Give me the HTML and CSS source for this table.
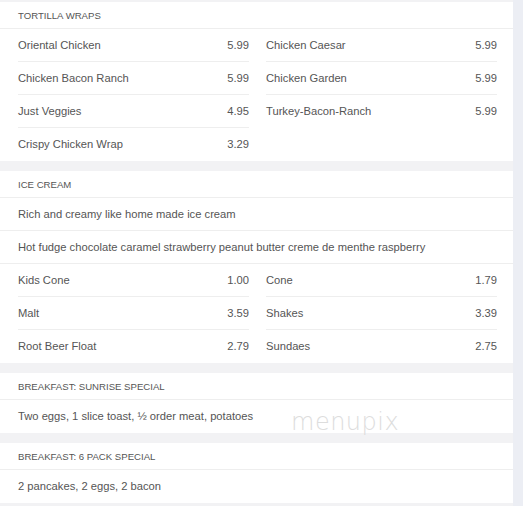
FILE: index.html
```html
<!DOCTYPE html>
<html lang="en">
<head>
    <meta charset="UTF-8">
    <meta name="viewport" content="width=device-width, initial-scale=1.0">
    <title>Menu</title>
    <link rel="stylesheet" href="styles.css">
</head>
<body>
    <div class="page">
        <div class="menu">
            <div class="section">
                <div class="section-title">Tortilla Wraps</div>
                <div class="items">
                    <div class="col">
                        <div class="item"><span>Oriental Chicken</span><span>5.99</span></div>
                        <div class="item"><span>Chicken Bacon Ranch</span><span>5.99</span></div>
                        <div class="item"><span>Just Veggies</span><span>4.95</span></div>
                        <div class="item"><span>Crispy Chicken Wrap</span><span>3.29</span></div>
                    </div>
                    <div class="col">
                        <div class="item"><span>Chicken Caesar</span><span>5.99</span></div>
                        <div class="item"><span>Chicken Garden</span><span>5.99</span></div>
                        <div class="item"><span>Turkey-Bacon-Ranch</span><span>5.99</span></div>
                    </div>
                </div>
            </div>

            <div class="section">
                <div class="section-title">Ice Cream</div>
                <div class="desc">Rich and creamy like home made ice cream</div>
                <div class="desc">Hot fudge chocolate caramel strawberry peanut butter creme de menthe raspberry</div>
                <div class="items">
                    <div class="col">
                        <div class="item"><span>Kids Cone</span><span>1.00</span></div>
                        <div class="item"><span>Malt</span><span>3.59</span></div>
                        <div class="item"><span>Root Beer Float</span><span>2.79</span></div>
                    </div>
                    <div class="col">
                        <div class="item"><span>Cone</span><span>1.79</span></div>
                        <div class="item"><span>Shakes</span><span>3.39</span></div>
                        <div class="item"><span>Sundaes</span><span>2.75</span></div>
                    </div>
                </div>
            </div>

            <div class="section">
                <div class="section-title">Breakfast: Sunrise Special</div>
                <div class="desc last">Two eggs, 1 slice toast, ½ order meat, potatoes</div>
            </div>

            <div class="section">
                <div class="section-title">Breakfast: 6 Pack Special</div>
                <div class="desc last">2 pancakes, 2 eggs, 2 bacon</div>
            </div>

            <div class="watermark">menupix</div>
        </div>
    </div>
</body>
</html>
```

FILE: styles.css
```css
body {
    margin: 0;
    font-family: "Liberation Sans", Arial, sans-serif;
    background-color: #eceef4;
    color: #555;
}
.page {
    width: 513px;
    min-height: 506px;
    background-color: #f2f2f4;
    padding-top: 2px;
}
.menu {
    position: relative;
}
.section {
    background-color: white;
    margin-bottom: 10px;
}
.section-title {
    height: 26px;
    line-height: 28px;
    padding-left: 18px;
    font-size: 9.6px;
    text-transform: uppercase;
    color: #555;
    border-bottom: 1px solid #eee;
}
.desc {
    height: 32px;
    line-height: 33px;
    padding-left: 18px;
    font-size: 11.2px;
    border-bottom: 1px solid #eee;
}
.desc.last {
    border-bottom: none;
    height: 33px;
}
.items {
    display: grid;
    grid-template-columns: 231px 231px;
    column-gap: 17px;
    padding-left: 18px;
}
.item {
    display: flex;
    justify-content: space-between;
    height: 32px;
    line-height: 33px;
    font-size: 11.2px;
    border-bottom: 1px solid #eee;
}
.col .item:last-child {
    border-bottom: none;
    height: 33px;
}
.watermark {
    position: absolute;
    left: 291px;
    top: 406px;
    font-family: "DejaVu Sans", sans-serif;
    font-weight: 200;
    font-size: 24px;
    letter-spacing: 0.5px;
    color: #ddd;
}
```
